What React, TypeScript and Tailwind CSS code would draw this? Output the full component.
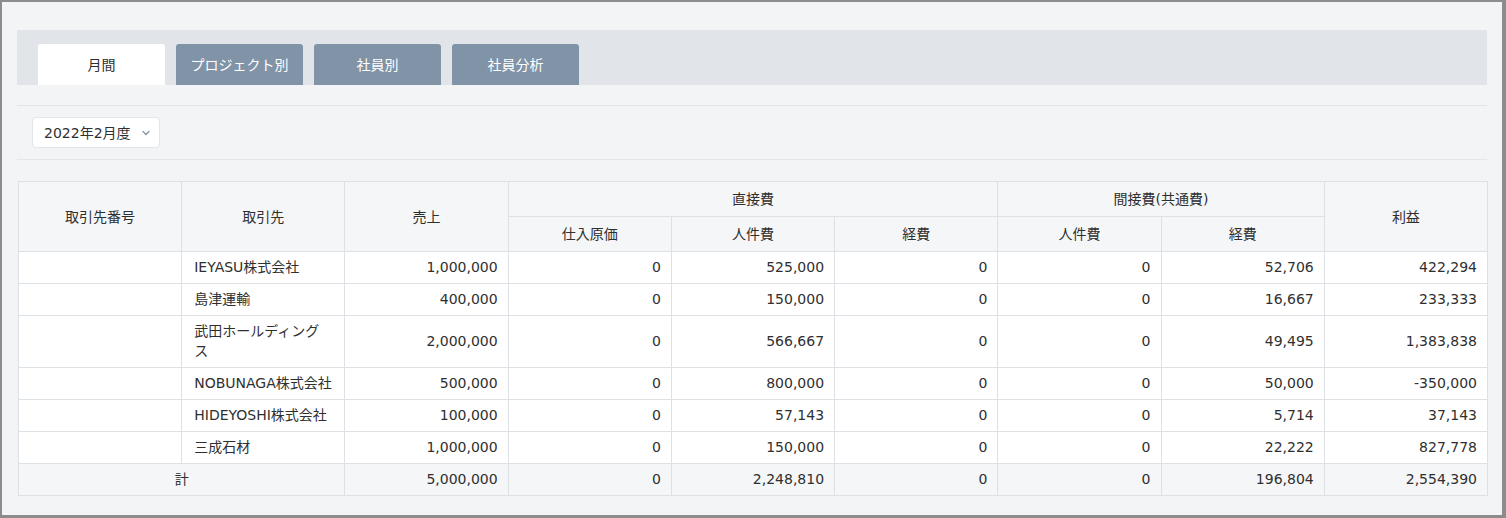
import React, { useState } from 'react';

const tabs = ['月間', 'プロジェクト別', '社員別', '社員分析'];

interface Row {
  code: string;
  name: string;
  sales: string;
  purchase: string;
  labor: string;
  expense: string;
  sharedLabor: string;
  sharedExpense: string;
  profit: string;
}

const rows: Row[] = [
  { code: '', name: 'IEYASU株式会社', sales: '1,000,000', purchase: '0', labor: '525,000', expense: '0', sharedLabor: '0', sharedExpense: '52,706', profit: '422,294' },
  { code: '', name: '島津運輸', sales: '400,000', purchase: '0', labor: '150,000', expense: '0', sharedLabor: '0', sharedExpense: '16,667', profit: '233,333' },
  { code: '', name: '武田ホールディングス', sales: '2,000,000', purchase: '0', labor: '566,667', expense: '0', sharedLabor: '0', sharedExpense: '49,495', profit: '1,383,838' },
  { code: '', name: 'NOBUNAGA株式会社', sales: '500,000', purchase: '0', labor: '800,000', expense: '0', sharedLabor: '0', sharedExpense: '50,000', profit: '-350,000' },
  { code: '', name: 'HIDEYOSHI株式会社', sales: '100,000', purchase: '0', labor: '57,143', expense: '0', sharedLabor: '0', sharedExpense: '5,714', profit: '37,143' },
  { code: '', name: '三成石材', sales: '1,000,000', purchase: '0', labor: '150,000', expense: '0', sharedLabor: '0', sharedExpense: '22,222', profit: '827,778' },
];

const th = 'border border-[#dde1e6] px-3 py-[7px] font-normal text-center align-middle';
const td = 'border border-[#dde1e6] pl-3 pr-2.5 pt-[5px] pb-[6px] text-right align-middle';

export default function App() {
  const [active, setActive] = useState(0);

  return (
    <div
      className="w-[1506px] h-[518px] box-border border-t-2 border-l-2 border-b-[3px] border-r-[4px] border-[#8c8c8c] bg-[#f3f4f6] px-[15px] pt-[28px] text-[14px] leading-5 text-[#2f2f2f]"
      style={{ fontFamily: '"DejaVu Sans", "Noto Sans CJK JP", sans-serif' }}
    >
      <div className="flex items-end gap-[11px] h-[55px] bg-[#e1e5ea] px-[21px]">
        {tabs.map((t, i) => (
          <button
            key={t}
            onClick={() => setActive(i)}
            className={
              i === active
                ? 'w-[127px] h-[41px] rounded-t-[3px] bg-white text-[#2f2f2f]'
                : 'w-[127px] h-[41px] rounded-t-[3px] bg-[#8193a7] text-white'
            }
          >
            {t}
          </button>
        ))}
      </div>

      <div className="mt-[20px] h-[55px] border-y border-[#e2e5e9] flex items-center px-[15px]">
        <div className="flex items-center h-[31px] w-[128px] bg-white border border-[#e3e6ea] rounded-[4px] pl-[11px] pr-[8px] justify-between">
          <span>2022年2月度</span>
          <svg width="10" height="10" viewBox="0 0 10 10" fill="none">
            <path d="M2 3.5 L5 6.5 L8 3.5" stroke="#8a94a0" strokeWidth="1.3" strokeLinecap="round" strokeLinejoin="round" />
          </svg>
        </div>
      </div>

      <table className="mt-[21px] ml-px w-[1470px] table-fixed border-collapse">
        <thead className="bg-[#f5f6f8]">
          <tr>
            <th rowSpan={2} className={th}>取引先番号</th>
            <th rowSpan={2} className={th}>取引先</th>
            <th rowSpan={2} className={th}>売上</th>
            <th colSpan={3} className={th}>直接費</th>
            <th colSpan={2} className={th}>間接費(共通費)</th>
            <th rowSpan={2} className={th}>利益</th>
          </tr>
          <tr>
            <th className={th}>仕入原価</th>
            <th className={th}>人件費</th>
            <th className={th}>経費</th>
            <th className={th}>人件費</th>
            <th className={th}>経費</th>
          </tr>
        </thead>
        <tbody className="bg-white">
          {rows.map((r) => (
            <tr key={r.name}>
              <td className={td}>{r.code}</td>
              <td className="border border-[#dde1e6] px-3 pt-[5px] pb-[6px] text-left align-middle">{r.name}</td>
              <td className={td}>{r.sales}</td>
              <td className={td}>{r.purchase}</td>
              <td className={td}>{r.labor}</td>
              <td className={td}>{r.expense}</td>
              <td className={td}>{r.sharedLabor}</td>
              <td className={td}>{r.sharedExpense}</td>
              <td className={td}>{r.profit}</td>
            </tr>
          ))}
          <tr className="bg-[#f5f6f8]">
            <td colSpan={2} className="border border-[#dde1e6] px-3 pt-[5px] pb-[6px] text-center align-middle">計</td>
            <td className={td}>5,000,000</td>
            <td className={td}>0</td>
            <td className={td}>2,248,810</td>
            <td className={td}>0</td>
            <td className={td}>0</td>
            <td className={td}>196,804</td>
            <td className={td}>2,554,390</td>
          </tr>
        </tbody>
      </table>
    </div>
  );
}
